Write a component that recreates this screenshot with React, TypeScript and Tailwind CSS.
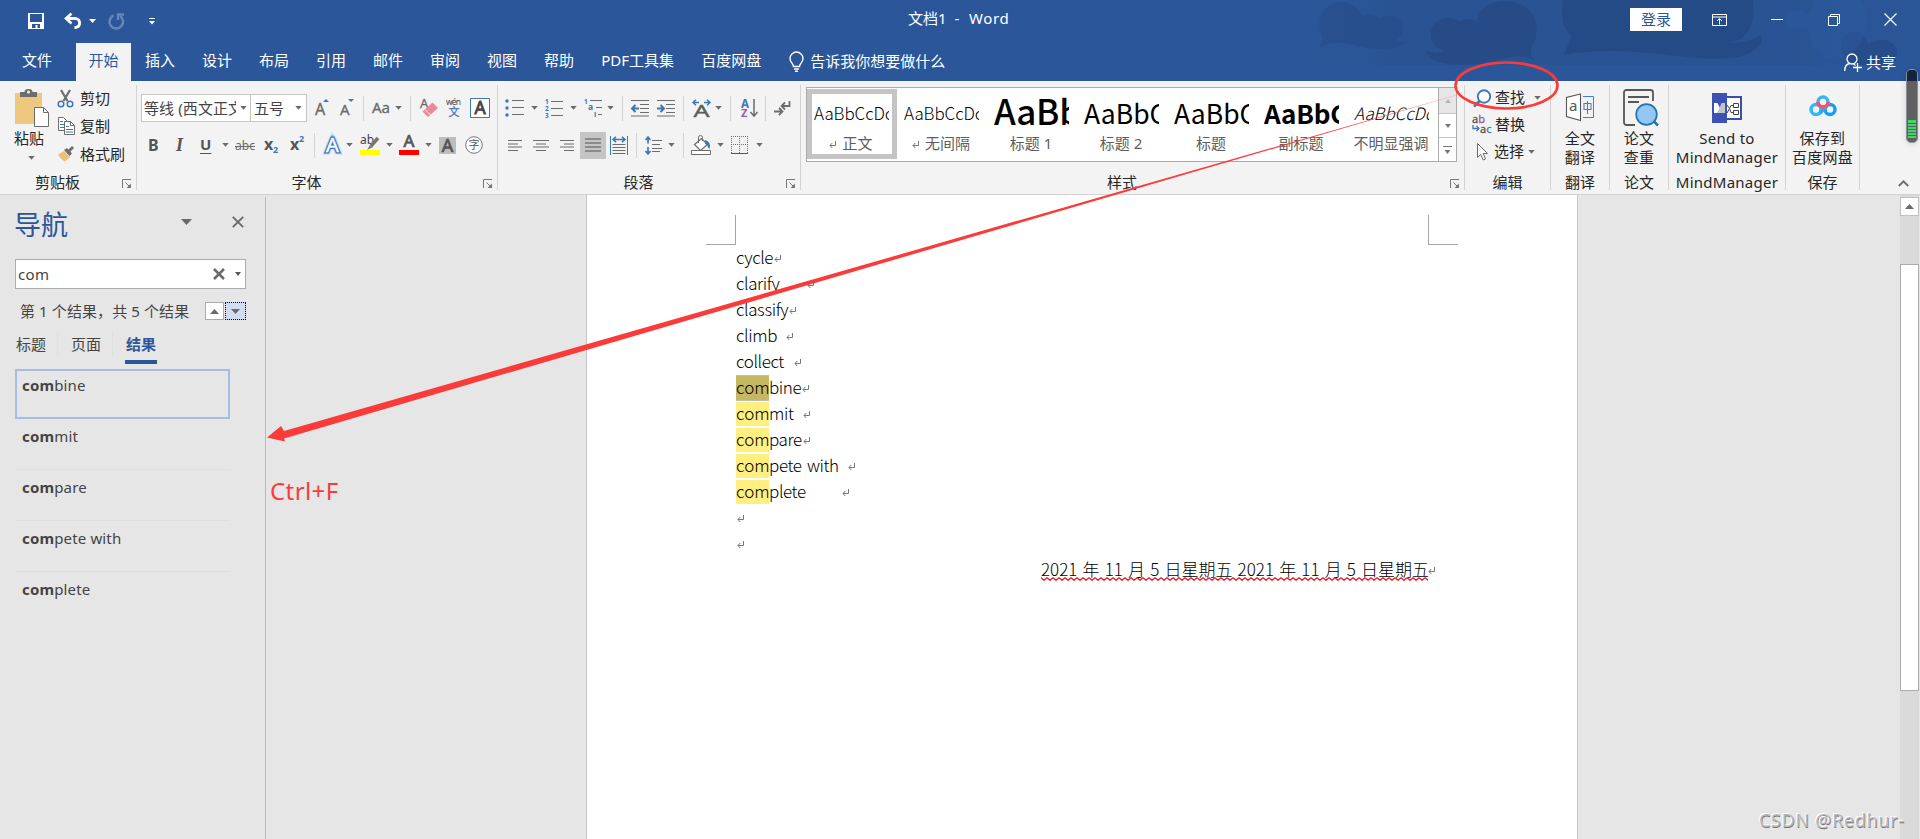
import React from "react";

const UI = "font-['Noto_Sans','Noto_Sans_CJK_SC',sans-serif]";
const DOC = "font-['Noto_Sans_CJK_SC',sans-serif]";

function Ico({
  w,
  h,
  className = "",
  children,
}: {
  w: number;
  h: number;
  className?: string;
  children: React.ReactNode;
}) {
  return (
    <svg width={w} height={h} viewBox={`0 0 ${w} ${h}`} fill="none" className={`shrink-0 overflow-visible ${className}`}>
      {children}
    </svg>
  );
}

function Caret({ className = "" }: { className?: string }) {
  return (
    <Ico w={7} h={4} className={className}>
      <path d="M.3 0h6.400L3.500 3.700z" fill="#6a6a6a" />
    </Ico>
  );
}

function Sep({ className = "" }: { className?: string }) {
  return <div className={`h-[25px] w-px shrink-0 bg-[#d2d2d2] ${className}`} />;
}

function Group({
  width,
  label,
  launcher,
  children,
}: {
  width: string;
  label: string;
  launcher?: boolean;
  children: React.ReactNode;
}) {
  return (
    <section className={`flex h-[105px] shrink-0 flex-col border-r border-[#d2d2d2] ${width}`}>
      <div className="h-[88px]">{children}</div>
      <div className="flex h-[17px] items-center leading-[17px]">
        <span className={`flex-1 pt-[2px] text-center whitespace-nowrap ${launcher ? "pr-[7px]" : ""} ${label === "MindManager" ? "tracking-[0.25px]" : ""}`}>
          {label}
        </span>
        {launcher && (
          <Ico w={10} h={10} className="mt-1 mr-1">
            <path d="M.5 9V.5H9" stroke="#777" />
            <path d="M3.500 3.500 7 7" stroke="#777" />
            <path d="M9 4.500V9H4.500z" fill="#777" />
          </Ico>
        )}
      </div>
    </section>
  );
}

function TitleBar() {
  return (
    <div className="relative flex h-[43px] items-center text-white">
      <div className="flex w-[908px] shrink-0 items-center pb-px">
        <Ico w={16} h={16} className="ml-7">
          <path d="M0 0h16v16H0z" fill="#fff" />
          <path d="M2 1h12v8H2zM4 11h8v4H9.500v-3h-2v3H4z" fill="#2b579a" />
        </Ico>
        <Ico w={18} h={16} className="ml-5">
          <path d="M2 5.500h10a4.600 4.600 0 0 1 0 9h-1.500" stroke="#fff" strokeWidth="2.800" />
          <path d="M7.500.5 2 5.500l5.500 5" stroke="#fff" strokeWidth="2.600" />
        </Ico>
        <Ico w={7} h={4} className="ml-[7px]">
          <path d="M0 0h7L3.500 4z" fill="#fff" />
        </Ico>
        <Ico w={17} h={17} className="ml-3">
          <path d="M5.500 2.500a6.800 6.800 0 1 0 6.500.500" stroke="#6586b7" strokeWidth="2.500" />
          <path d="M10 7V1.500h6" stroke="#6586b7" strokeWidth="2.300" />
        </Ico>
        <Ico w={6} h={7} className="ml-6">
          <path d="M0 0h6v1H0zM0 3h6L3 6.500z" fill="#fff" />
        </Ico>
      </div>
      <span className="shrink-0 pb-[6px] whitespace-pre">
        文档1&nbsp; -&nbsp; <span className="ml-[2px] tracking-[0.6px]">Word</span>
      </span>
      <div className="ml-auto flex w-[290px] shrink-0 items-center pb-1">
        <button className="h-[23px] w-[52px] bg-white leading-[23px] text-[#2b579a]">登录</button>
        <Ico w={15} h={12} className="ml-[30px]">
          <path d="M.5.5h14v11H.5zM.5 3h14M7.500 10.500V5M5 7l2.500-2.500L10 7" stroke="#fff" />
        </Ico>
        <Ico w={12} h={1} className="ml-11">
          <path d="M0 0h12v1H0z" fill="#fff" />
        </Ico>
        <Ico w={12} h={12} className="ml-[45px]">
          <path d="M.5 2.500h9v9h-9zM2.500 2.500v-2h9v9h-2" stroke="#fff" />
        </Ico>
        <Ico w={13} h={13} className="ml-[44px]">
          <path d="m.5.5 12 12m0-12-12 12" stroke="#fff" strokeWidth="1.200" />
        </Ico>
      </div>
    </div>
  );
}

function HeaderArt() {
  return (
    <svg width="630" height="65" viewBox="1290 0 630 65" className="absolute top-0 right-0">
      <defs>
        <linearGradient id="haze" x1="0" x2="1" y1="0" y2="0">
          <stop offset="0" stopColor="#274f8c" stopOpacity="0" />
          <stop offset=".2" stopColor="#274f8c" stopOpacity=".5" />
          <stop offset=".75" stopColor="#274f8c" stopOpacity=".45" />
          <stop offset="1" stopColor="#274f8c" stopOpacity=".2" />
        </linearGradient>
      </defs>
      <path d="M1290 0h630v65h-630z" fill="url(#haze)" />
      <g fill="#254a84">
        <path
          opacity=".5"
          d="M1319 48c5-8 4-10 2-15-6-17 6-31 21-31 11 0 17 7 20 14 10-5 16 1 17 2 10-6 25 0 24 11 0 6-5 10-8 12 5 1 9 0 13-1-10 13-38 9-50 6-15-4-29-5-39 2z"
        />
        <path
          opacity=".8"
          d="M1426 50c8 4 12 3 18 1-9-3-14-10-13-19 1-14 19-18 29-10 6-5 14-3 17 1 0-13 12-22 28-22 22 0 35 17 31 35-2 10-7 13-5 20l4 5c-12-8-25-5-45 1-25 6-66 3-64-12z"
        />
        <path opacity=".85" d="M1563 0h190c2 24-3 40-26 43 14 0 25-2 34-8 4 12-12 22-32 23-40 5-100-15-165-3 2-8 6-11 7-19-9-10-10-20-8-36z" />
        <path opacity=".75" d="M1843 55c-6-13 3-23 11-23 9 0 13 6 14 12 10-7 22-5 28 3 2 7 0 15-3 18h-40z" />
      </g>
      <path d="M1785 16c8-8 20-7 23-1C1814 5 1815 0 1815 0h46c14 20 4 50-20 59-16 4-32-10-34-32-8 4-24 2-22-11z" fill="#2b5a9f" opacity=".5" />
    </svg>
  );
}

function Tabs() {
  return (
    <nav className="relative flex h-[38px] items-center leading-[34px] whitespace-nowrap text-white">
      <span className="h-[38px] w-[76px] pl-[22px]">文件</span>
      <span className="h-[38px] w-[55px] bg-[#f3f3f3] text-center text-[#2b579a]">开始</span>
      <div className="ml-[14px] flex h-[38px] gap-[27px]">
        <span>插入</span>
        <span>设计</span>
        <span>布局</span>
        <span>引用</span>
        <span>邮件</span>
        <span>审阅</span>
        <span>视图</span>
        <span>帮助</span>
        <span className="w-[73px]">PDF工具集</span>
        <span>百度网盘</span>
      </div>
      <Ico w={15} h={20} className="mb-px ml-[28px]">
        <path d="M4.500 14.500c0-3-3.500-4-3.500-8a6.500 6.500 0 0 1 13 0c0 4-3.500 5-3.500 8zM5 17h5M6 19.300h3" stroke="#fff" strokeWidth="1.400" />
      </Ico>
      <span className="mb-[2px] ml-1.5">告诉我你想要做什么</span>
      <div className="ml-auto flex w-[76px] items-center">
        <Ico w={18} h={19}>
          <circle cx="8" cy="6" r="5" stroke="#fff" strokeWidth="1.300" />
          <path d="M.7 18c0-4 2-7 5-7.500M9.500 11l2 1.500M13.500 10v9M9 14.500h9" stroke="#fff" strokeWidth="1.300" />
        </Ico>
        <span className="ml-1">共享</span>
      </div>
    </nav>
  );
}

function Clipboard() {
  return (
    <Group width="w-[137px]" label="剪贴板" launcher>
      <div className="flex">
        <div className="flex w-[57px] flex-col pt-1 pl-[14px]">
          <Ico w={35} h={38} className="ml-px">
            <path d="M0 4h27v31H0z" fill="#edc87e" />
            <path d="M5 3h4.500a4 3 0 0 1 8 0H22v5H5z" fill="#6d6d6d" />
            <circle cx="13.500" cy="3" r="1.500" fill="#f3f3f3" />
            <path d="M19.500 18.500h9l5 5v14h-14z" fill="#fff" stroke="#6d6d6d" />
            <path d="M28.500 18.500v5h5" stroke="#6d6d6d" />
          </Ico>
          <span className="mt-[2px] leading-[18px]">粘贴</span>
          <Caret className="mt-[9px] ml-[14px]" />
        </div>
        <div className="-mt-px flex flex-col">
          <div className="flex h-[28px] items-center gap-[6px] leading-[28px]">
            <Ico w={17} h={18} className="mt-px">
              <path d="m4 0 6.500 11M13 0 6.500 11" stroke="#6d6d6d" strokeWidth="2.200" />
              <circle cx="4" cy="14" r="2.800" stroke="#3f77b5" strokeWidth="1.500" />
              <circle cx="13" cy="14" r="2.800" stroke="#3f77b5" strokeWidth="1.500" />
            </Ico>
            剪切
          </div>
          <div className="flex h-[28px] items-center gap-[5px] leading-[28px]">
            <Ico w={18} h={18}>
              <path d="M1.500.5h5l4 4v9h-9z" fill="#fff" stroke="#6d6d6d" />
              <path d="M3 4.500h3M3 7.500h5M3 10.500h5" stroke="#3f77b5" />
              <path d="M7.500 4.500h6l4 4v9h-10z" fill="#fff" stroke="#6d6d6d" />
              <path d="M13.500 4.500v4h4" stroke="#6d6d6d" />
              <path d="M9 9.500h3M9 12.500h7M9 15h7" stroke="#3f77b5" />
            </Ico>
            复制
          </div>
          <div className="flex h-[28px] items-center gap-[5px] leading-[28px]">
            <Ico w={18} h={16}>
              <path d="M1 8.500 7 5l6 6-5 4.500C5 14 3 12 1 8.500z" fill="#edc07a" />
              <path d="m7 4 3-2 5 5.500-2.500 2.500z" fill="#6d6d6d" />
              <path d="m12 5 4-4" stroke="#6d6d6d" strokeWidth="3" />
            </Ico>
            格式刷
          </div>
        </div>
      </div>
    </Group>
  );
}

function FontGroup() {
  const bold = { fontFamily: "Noto Sans", fontWeight: 700 };
  const reg = { fontFamily: "Noto Sans" };
  return (
    <Group width="w-[361px]" label="字体" launcher>
      <div className="mt-[9px] flex h-[28px] items-center">
        <div className="ml-1 flex h-[28px] w-[110px] shrink-0 items-center border border-[#c6c6c6] bg-white text-[#444]">
          <span className="ml-[2px] w-[92px] overflow-hidden tracking-[0.1px] whitespace-nowrap">等线 (西文正文)</span>
          <Caret className="ml-[4px]" />
        </div>
        <div className="flex h-[28px] w-[56px] shrink-0 items-center border border-l-0 border-[#c6c6c6] bg-white text-[#444]">
          <span className="ml-[3px] w-[30px]">五号</span>
          <Caret className="ml-[11px]" />
        </div>
        <Ico w={15} h={18} className="ml-2">
          <text x="0" y="16" fontSize="16" fill="#6a6a6a" stroke="#6a6a6a" strokeWidth=".3" style={reg}>A</text>
          <path d="M8 3h6l-3-3z" fill="#3f77b5" />
        </Ico>
        <Ico w={15} h={18} className="ml-[10px]">
          <text x="0" y="16" fontSize="15" fill="#6a6a6a" stroke="#6a6a6a" strokeWidth=".3" style={reg}>A</text>
          <path d="M8 0h6l-3 3z" fill="#3f77b5" />
        </Ico>
        <Sep className="ml-2" />
        <Ico w={19} h={16} className="ml-2">
          <text x="0" y="12.500" fontSize="15" fill="#6a6a6a" stroke="#6a6a6a" strokeWidth=".3" style={reg}>Aa</text>
        </Ico>
        <Caret className="ml-1" />
        <Sep className="ml-2" />
        <Ico w={19} h={20} className="ml-[9px]">
          <text x="0" y="10" fontSize="13" fill="#6a6a6a" stroke="#6a6a6a" strokeWidth=".3" style={reg}>A</text>
          <path d="m2.500 13.500 10-9L18 10 8 19z" fill="#e88a9c" />
          <path d="m5 11.500 5.500 5.500" stroke="#f3f3f3" />
        </Ico>
        <Ico w={16} h={20} className="ml-[7px]">
          <text x="0" y="7" fontSize="8.500" fill="#444" textLength="15" style={reg}>wén</text>
          <text x="2.500" y="18" fontSize="11" fill="#3f77b5" stroke="#3f77b5" strokeWidth=".3" style={{ fontFamily: "Noto Sans CJK SC" }}>文</text>
        </Ico>
        <Ico w={20} h={20} className="ml-2">
          <path d="M.5.5h19v19H.5z" fill="#fff" stroke="#3f77b5" />
          <text x="10" y="16" fontSize="17.500" textAnchor="middle" fill="#444" stroke="#444" strokeWidth=".8" style={reg}>A</text>
        </Ico>
      </div>
      <div className="mt-[9px] flex h-[28px] items-center text-[#555]">
        <span className="ml-[11px] w-[10px] text-[16px] font-bold">B</span>
        <span className="ml-[18px] w-[10px] font-['Liberation_Serif'] text-[18px] font-bold italic">I</span>
        <span className="mb-[2px] ml-[14px] w-[12px] text-[15px] font-bold underline decoration-1 underline-offset-[3px]">U</span>
        <Caret className="ml-[10px]" />
        <Ico w={20} h={18} className="ml-1.5">
          <text x="0" y="14" fontSize="13" fill="#6a6a6a" textLength="20" lengthAdjust="spacingAndGlyphs" style={reg}>abc</text>
          <path d="M0 10.500h20" stroke="#6a6a6a" />
        </Ico>
        <Ico w={15} h={18} className="ml-[9px]">
          <text x="0" y="14" fontSize="16" fill="#555" style={bold}>x</text>
          <text x="9" y="17" fontSize="9" fill="#3f77b5" style={bold}>2</text>
        </Ico>
        <Ico w={15} h={20} className="ml-[11px]">
          <text x="0" y="15" fontSize="16" fill="#555" style={bold}>x</text>
          <text x="9" y="7" fontSize="9" fill="#3f77b5" style={bold}>2</text>
        </Ico>
        <Sep className="ml-[9px]" />
        <Ico w={17} h={20} className="ml-[9px]">
          <text x="8.500" y="16.500" fontSize="20" textAnchor="middle" stroke="#c3d9f2" strokeWidth="5" style={reg}>A</text>
          <text x="8.500" y="16.500" fontSize="20" textAnchor="middle" stroke="#3f77c0" strokeWidth="3" style={reg}>A</text>
          <text x="8.500" y="16.500" fontSize="20" textAnchor="middle" fill="#fff" stroke="#fff" strokeWidth=".4" style={reg}>A</text>
        </Ico>
        <Caret className="ml-[5px]" />
        <Ico w={20} h={20} className="ml-[7px]">
          <text x="0" y="9" fontSize="12" fill="#444" style={reg}>ab</text>
          <path d="m18 3-7 8" stroke="#777" strokeWidth="3.500" />
          <path d="m10 10 3 2-6 3z" fill="#777" />
          <path d="M0 15h20v5H0z" fill="#ff0" />
        </Ico>
        <Caret className="ml-1.5" />
        <Ico w={20} h={20} className="ml-1.5">
          <text x="10" y="12" fontSize="17" textAnchor="middle" fill="#555" stroke="#555" strokeWidth=".7" style={reg}>A</text>
          <path d="M0 15h20v5H0z" fill="red" />
        </Ico>
        <Caret className="ml-1.5" />
        <Ico w={17} h={19} className="ml-[7px]">
          <path d="M0 1h17v17H0z" fill="#bdbdbd" />
          <text x="8.500" y="15.500" fontSize="18" textAnchor="middle" fill="#555" stroke="#555" strokeWidth=".7" style={reg}>A</text>
        </Ico>
        <Ico w={18} h={18} className="ml-[9px]">
          <circle cx="9" cy="9" r="8.300" stroke="#777" fill="#fff" />
          <text x="9" y="13" fontSize="11" textAnchor="middle" fill="#555" style={{ fontFamily: "Noto Sans CJK SC" }}>字</text>
        </Ico>
      </div>
    </Group>
  );
}

function ParagraphGroup() {
  const g = "#6d6d6d";
  const b = "#3f77b5";
  const f = { fontFamily: "Noto Sans", fontWeight: 700 };
  return (
    <Group width="w-[303px]" label="段落" launcher>
      <div className="mt-[9px] flex h-[28px] items-center">
        <Ico w={20} h={18} className="ml-[7px]">
          <circle cx="2" cy="2" r="1.700" fill={b} />
          <circle cx="2" cy="9" r="1.700" fill={b} />
          <circle cx="2" cy="16" r="1.700" fill={b} />
          <path d="M7 1.500h12M7 8.500h12M7 15.500h12" stroke={g} />
        </Ico>
        <Caret className="ml-1.5" />
        <Ico w={19} h={19} className="ml-[7px]">
          <text y="5" fontSize="6.500" fill={b} style={f}>1</text>
          <text y="12" fontSize="6.500" fill={b} style={f}>2</text>
          <text y="19" fontSize="6.500" fill={b} style={f}>3</text>
          <path d="M6 2.500h12M6 9.500h12M6 16.500h12" stroke={g} />
        </Ico>
        <Caret className="ml-1.5" />
        <Ico w={19} h={18} className="ml-[7px]">
          <text y="4.500" fontSize="6.500" fill={b} style={f}>1</text>
          <text x="4" y="11" fontSize="8.500" fill={b} style={f}>a</text>
          <text x="10" y="17.500" fontSize="7.500" fill={b} style={f}>i</text>
          <path d="M6 1.500h12M12 8.500h6M14 15.500h4" stroke={g} />
        </Ico>
        <Caret className="ml-1" />
        <Sep className="ml-2" />
        <Ico w={18} h={17} className="ml-2">
          <path d="M0 .5h18M9 4.500h9M9 8.500h9M9 12.500h9M0 16h18" stroke={g} />
          <path d="M1 8.500h7M4.500 5 1 8.500 4.500 12" stroke={b} strokeWidth="2" />
        </Ico>
        <Ico w={18} h={17} className="ml-2">
          <path d="M0 .5h18M9 4.500h9M9 8.500h9M9 12.500h9M0 16h18" stroke={g} />
          <path d="M0 8.500h7M3.500 5 7 8.500 3.500 12" stroke={b} strokeWidth="2" />
        </Ico>
        <Sep className="ml-2" />
        <Ico w={19} h={19} className="ml-2">
          <text x="1.500" y="17.500" fontSize="16" fill="#5f5f5f" stroke="#5f5f5f" strokeWidth=".4" textLength="16" lengthAdjust="spacingAndGlyphs" style={{ fontFamily: "Noto Sans" }}>A</text>
          <path d="M1 3.500h6M4 .8 1 3.500l3 2.700M18 3.500h-6M15 .8l3 2.700-3 2.700" stroke={b} strokeWidth="1.500" />
        </Ico>
        <Caret className="ml-1" />
        <Sep className="ml-2" />
        <Ico w={17} h={20} className="ml-[10px]">
          <text x="0" y="9.500" fontSize="11.500" fill={b} style={f}>A</text>
          <text x="0" y="19" fontSize="11" fill="#8e5bb0" style={f}>Z</text>
          <path d="M13 1v16M9.500 14l3.500 4 3.500-4" stroke={g} strokeWidth="1.500" />
        </Ico>
        <Sep className="ml-[7px]" />
        <Ico w={17} h={16} className="ml-2">
          <path d="M0 11.500h8M5 8l3.500 3.500L5 15" stroke={g} strokeWidth="1.800" />
          <path d="M15.500 1v5H8M11 2.500 7.500 6 11 9.500" stroke={g} strokeWidth="1.800" />
        </Ico>
      </div>
      <div className="mt-[9px] flex h-[28px] items-center">
        <Ico w={14} h={11} className="ml-[10px]">
          <path d="M0 .5h14M0 4h10M0 7h14M0 10.500h10" stroke={g} />
        </Ico>
        <Ico w={16} h={11} className="ml-[11px]">
          <path d="M0 .5h16M3 4h10M0 7h16M3 10.500h10" stroke={g} />
        </Ico>
        <Ico w={14} h={11} className="ml-[11px]">
          <path d="M0 .5h14M4 4h10M0 7h14M4 10.500h10" stroke={g} />
        </Ico>
        <div className="ml-1.5 flex h-[27px] w-[26px] shrink-0 items-center justify-center bg-[#c5c5c5]">
          <Ico w={16} h={14}>
            <path d="M0 1h16M0 5h16M0 9h16M0 13h16" stroke="#555" strokeWidth="1.100" />
          </Ico>
        </div>
        <Ico w={18} h={19} className="ml-1">
          <path d="M.5 0v19M17.500 0v19" stroke={b} />
          <path d="M3 3.500h12M6 .8 3 3.500l3 2.700M12 .8l3 2.700-3 2.700" stroke={b} strokeWidth="1.600" />
          <path d="M2.500 8.500h13M2.500 11.500h13M2.500 14.500h13M2.500 17.500h13" stroke={g} />
        </Ico>
        <Sep className="ml-2" />
        <Ico w={17} h={19} className="ml-2">
          <path d="M3 1v6.500M.5 4 3 1l2.500 3M3 11v6.500M.5 15 3 18l2.500-3" stroke={b} strokeWidth="1.700" />
          <path d="M7 4.500h10M7 8.500h8M7 12.500h10M7 15.500h8" stroke={g} />
        </Ico>
        <Caret className="ml-1.5" />
        <Sep className="ml-2" />
        <Ico w={20} h={20} className="ml-[7px]">
          <path d="m3.500 9.500 7-6 6 6-7 6z" fill="#fff" stroke={g} strokeWidth="1.200" />
          <path d="M7.500 8V2.500a2 2 0 0 1 4 0V6" stroke={g} />
          <path d="M14 5c4 1 6 4 4.500 9-2-1-1-4-4.500-5z" fill={b} />
          <path d="M.5 15.500h19v4H.5z" fill="#fff" stroke={g} />
        </Ico>
        <Caret className="ml-1.5" />
        <Ico w={17} h={18} className="ml-[7px]">
          <path d="M0 .5h17M0 8.500h17M.5 0v17M8.500 0v17M16.500 0v17" stroke={g} strokeDasharray="1 1" />
          <path d="M0 17.500h17" stroke="#555" />
        </Ico>
        <Caret className="ml-2" />
      </div>
    </Group>
  );
}

function ParaMark({ className = "" }: { className?: string }) {
  return (
    <Ico w={8} h={8} className={className}>
      <path d="M6.500 0v4.500H1M3.300 2 1 4.500 3.300 7" stroke="#777" />
    </Ico>
  );
}

const styleItems = [
  { name: "正文", mark: true, cls: "text-[17px] font-light tracking-[-0.1px] pt-[7px]" },
  { name: "无间隔", mark: true, cls: "text-[17px] font-light tracking-[-0.1px] pt-[7px]" },
  { name: "标题 1", cls: "text-[35px] font-medium tracking-[-0.3px] pt-[4px]" },
  { name: "标题 2", cls: "text-[26.500px] font-normal pt-[7px]" },
  { name: "标题", cls: "text-[26.500px] font-normal pt-[7px]" },
  { name: "副标题", cls: "text-[26px] font-bold tracking-[-0.2px] pt-[7px]" },
  { name: "不明显强调", cls: "text-[17px] font-light italic tracking-[-0.1px] pt-[7px] text-[#404040]" },
];

function StylesGroup() {
  return (
    <Group width="w-[664px]" label="样式" launcher>
      <div className="mt-[2px] ml-[5px] flex h-[75px] w-[651px] border border-[#ababab] bg-white">
        <div className="flex w-[631px] pt-px">
          {styleItems.map((s, i) => (
            <div
              key={s.name}
              className={`flex h-[70px] w-[90px] shrink-0 flex-col border-[5px] pr-[4px] pl-[2px] ${i === 0 ? "border-[#c5c5c5]" : "border-transparent"}`}
            >
              <div className={`-mt-[1px] h-[42px] w-[75px] overflow-hidden leading-[26px] whitespace-nowrap text-black ${DOC} ${s.cls}`}>
                AaBbCcDc
              </div>
              <div className="-mx-[6px] flex h-[16px] items-center justify-center gap-[5px] leading-[16px] whitespace-nowrap text-[#5e5e5e]">
                {s.mark && <ParaMark className="mt-1" />}
                {s.name}
              </div>
            </div>
          ))}
        </div>
        <div className="flex flex-1 flex-col border-l border-[#ababab]">
          <div className="flex h-[25px] items-center justify-center bg-[#e6e6e6]">
            <Ico w={6} h={4}>
              <path d="M0 4h6L3 0z" fill="#b5b5b5" />
            </Ico>
          </div>
          <div className="flex h-[25px] items-center justify-center border-y border-[#c6c6c6]">
            <Ico w={6} h={4}>
              <path d="M0 0h6L3 4z" fill="#777" />
            </Ico>
          </div>
          <div className="flex h-[23px] items-center justify-center">
            <Ico w={9} h={8}>
              <path d="M0 0h9v1H0zM1.500 4h6l-3 4z" fill="#777" />
            </Ico>
          </div>
        </div>
      </div>
    </Group>
  );
}

function EditGroup() {
  return (
    <Group width="w-[86px]" label="编辑">
      <div className="flex h-[25px] items-center pl-[8px] leading-[25px]">
        <Ico w={18} h={19} className="mt-[2px]">
          <circle cx="11" cy="7.500" r="6.200" stroke="#3f77b5" strokeWidth="1.900" fill="#fff" />
          <path d="M6.500 12 1 17.500" stroke="#3f77b5" strokeWidth="2.500" />
        </Ico>
        <span className="ml-[4px]">查找</span>
        <Caret className="ml-[9px]" />
      </div>
      <div className="flex h-[28px] items-center pl-[7px] leading-[28px]">
        <Ico w={20} h={19} className="mt-px">
          <text x="0" y="8" fontSize="11" fill="#555" stroke="#555" strokeWidth=".3" style={{ fontFamily: "Noto Sans" }}>
            a<tspan fill="#8e5bb0" stroke="#8e5bb0">b</tspan>
          </text>
          <text x="8" y="17.500" fontSize="11" fill="#555" stroke="#555" strokeWidth=".3" style={{ fontFamily: "Noto Sans" }}>
            a<tspan fill="#3f77b5" stroke="#3f77b5">c</tspan>
          </text>
          <path d="M1 10v3.500h5M4.500 11 7 13.500 4.500 16" stroke="#3f77b5" strokeWidth="1.300" />
        </Ico>
        <span className="ml-[3px]">替换</span>
      </div>
      <div className="flex h-[27px] items-center pl-[12px] leading-[27px]">
        <Ico w={12} h={18}>
          <path d="M.5.5v14l3.200-3 2.500 5.500 2.300-1-2.300-5.500h4.300z" fill="#fff" stroke="#6d6d6d" />
        </Ico>
        <span className="ml-[5px]">选择</span>
        <Caret className="ml-1" />
      </div>
    </Group>
  );
}

function BigButton({ lines, children }: { lines: string[]; children: React.ReactNode }) {
  return (
    <div className="flex flex-col items-center tracking-[0.25px] whitespace-nowrap">
      <div className="flex h-[44px] items-center justify-center">{children}</div>
      {lines.map((l) => (
        <span key={l} className="leading-[19px]">
          {l}
        </span>
      ))}
    </div>
  );
}

function Ribbon() {
  return (
    <div className="flex h-[114px] border-b border-[#d2d2d2] bg-[#f3f3f3] pt-1 text-[#262626]">
      <Clipboard />
      <FontGroup />
      <ParagraphGroup />
      <StylesGroup />
      <EditGroup />
      <Group width="w-[59px]" label="翻译">
        <BigButton lines={["全文", "翻译"]}>
          <Ico w={28} h={29} className="mt-px">
            <path d="M14.500 1 .5 4.500v19l14 4z" fill="#fff" stroke="#555" strokeWidth="1.100" />
            <path d="M17 3.500h10.500v21H17" stroke="#3f82d0" />
            <text x="3" y="18" fontSize="15" fill="#555" style={{ fontFamily: "Noto Sans" }}>a</text>
            <path d="M18 10.500h7v6h-7zM21.500 8v13" stroke="#3f82d0" strokeWidth="1.100" />
          </Ico>
        </BigButton>
      </Group>
      <Group width="w-[59px]" label="论文">
        <BigButton lines={["论文", "查重"]}>
          <Ico w={36} h={38} className="mt-px ml-1">
            <path d="M30 12V3.500A2.500 2.500 0 0 0 27.500 1h-24A2.500 2.500 0 0 0 1 3.500v30A2.500 2.500 0 0 0 3.500 36H12" stroke="#545954" strokeWidth="1.800" />
            <path d="M5 8h21M5 13h11" stroke="#545954" strokeWidth="2" />
            <path d="m30.500 32 4.500 4.500" stroke="#2674a8" strokeWidth="2.500" />
            <circle cx="23.500" cy="25.500" r="10.300" fill="#93c7f7" stroke="#2674a8" strokeWidth="1.700" />
          </Ico>
        </BigButton>
      </Group>
      <Group width="w-[117px]" label="MindManager">
        <BigButton lines={["Send to", "MindManager"]}>
          <Ico w={30} h={30} className="mt-px">
            <path d="M14 4h15v22H14z" fill="#fff" stroke="#3b4fa5" strokeWidth="2" />
            <path d="M0 0h15v30H0z" fill="#3c51b4" />
            <path d="M2 10h3.500L8 15l-2.500 5H2z" fill="#fff" />
            <path d="M13 10H9.500L5.500 20H13z" fill="#c3c5cc" />
            <path d="M21.500 10.500h5v4h-5zM21.500 17.500h5v4h-5zM21 12.500h-2l-1.500 3 1.500 4h2M15 12l2.500 3.500L15 20" stroke="#444" />
          </Ico>
        </BigButton>
      </Group>
      <Group width="w-[74px]" label="保存">
        <BigButton lines={["保存到", "百度网盘"]}>
          <Ico w={28} h={22} className="mb-[2px]">
            <circle cx="7" cy="14.500" r="5" stroke="#2fb9f8" strokeWidth="3.500" />
            <circle cx="21" cy="14.500" r="5" stroke="#159ff5" strokeWidth="3.500" />
            <path d="m10.500 18.500 7.500-8" stroke="#25adf7" strokeWidth="3.500" />
            <circle cx="14" cy="7" r="5" fill="#f3f3f3" stroke="#36b6f5" strokeWidth="3.500" />
            <path d="M9 7a5 5 0 0 0 10 0" stroke="#f8506d" strokeWidth="3.500" />
          </Ico>
        </BigButton>
      </Group>
      <Ico w={11} h={7} className="mt-[95px] ml-[38px]">
        <path d="m.8 6 4.700-4.700L10.200 6" stroke="#6d6d6d" strokeWidth="1.900" />
      </Ico>
    </div>
  );
}

const results = ["bine", "mit", "pare", "pete with", "plete"];

function NavPane() {
  return (
    <aside className="mt-[2px] flex w-[266px] shrink-0 flex-col border-r border-[#bababa] text-[#444]">
      <div className="flex h-[62px] items-center pl-[14px]">
        <h1 className="w-[167px] pb-[5px] text-[27px] text-[#2b579a]">导航</h1>
        <Ico w={11} h={6} className="mb-[12px]">
          <path d="M0 0h11L5.500 6z" fill="#6a6a6a" />
        </Ico>
        <Ico w={12} h={12} className="mb-[12px] ml-10">
          <path d="m.8.8 10.400 10.400m0-10.400L.8 11.200" stroke="#6a6a6a" strokeWidth="1.900" />
        </Ico>
      </div>
      <div className="ml-[15px] flex h-[30px] w-[231px] items-center border border-[#ababab] bg-white pl-[2px]">
        <span className="w-[195px] tracking-[0.3px]">com</span>
        <Ico w={12} h={12} className="mb-px">
          <path d="m1 1 10 10m0-10L1 11" stroke="#6a6a6a" strokeWidth="2.500" />
        </Ico>
        <Ico w={6} h={4} className="ml-[10px]">
          <path d="M0 0h6L3 4z" fill="#555" />
        </Ico>
      </div>
      <div className="mt-[13px] ml-5 flex h-[18px] items-center">
        <span className="w-[185px] leading-[18px] tracking-[0.1px] whitespace-nowrap">第 1 个结果，共 5 个结果</span>
        <div className="flex h-[18px] w-[19px] items-center justify-center border border-[#ababab] bg-white">
          <Ico w={9} h={5}>
            <path d="M0 5h9L4.500 0z" fill="#6a6a6a" />
          </Ico>
        </div>
        <div className="ml-px flex h-[18px] w-[21px] items-center justify-center border border-dotted border-black bg-[#d3ddf1]">
          <Ico w={9} h={5}>
            <path d="M0 0h9L4.500 5z" fill="#6a6a6a" />
          </Ico>
        </div>
      </div>
      <div className="mt-[12px] ml-4 flex h-[32px]">
        <span className="mb-[8px] w-[42px] border-r border-[#e0e0e0] leading-[24px]">标题</span>
        <span className="mb-[8px] w-[55px] border-r border-[#e0e0e0] pl-[13px] leading-[24px]">页面</span>
        <span className="ml-[12px] h-[32px] w-[32px] border-b-4 border-[#2b579a] text-center leading-[24px] font-bold text-[#2b579a]">结果</span>
      </div>
      <div className="mt-[5px] ml-[15px] w-[215px] tracking-[0.15px]">
        {results.map((r, i) => (
          <div
            key={r}
            className={
              i === 0
                ? "h-[50px] border-2 border-[#a3bde3] pl-[5px] leading-[29px]"
                : "h-[51px] pt-[2px] pl-[7px] leading-[30px] not-last:border-b not-last:border-[#dfdfdf]"
            }
          >
            <b>com</b>
            {r}
          </div>
        ))}
      </div>
    </aside>
  );
}

const docLines = [
  { text: "cycle", w: "w-[38px]" },
  { text: "clarify", w: "w-[71px]" },
  { text: "classify", w: "w-[53px]" },
  { text: "climb", w: "w-[50px]" },
  { text: "collect", w: "w-[58px]" },
  { hit: "com", text: "bine", w: "w-[66px]", active: true },
  { hit: "com", text: "mit", w: "w-[67px]" },
  { hit: "com", text: "pare", w: "w-[67px]" },
  { hit: "com", text: "pete with", w: "w-[112px]" },
  { hit: "com", text: "plete", w: "w-[106px]" },
  { text: "", w: "w-[1px]" },
  { text: "", w: "w-[1px]" },
];

function Page() {
  return (
    <main className={`ml-[320px] w-[992px] shrink-0 border-x border-[#c6c6c6] bg-white text-black ${DOC}`}>
      <div className="mt-5 flex justify-between pr-[119px] pl-[119px]">
        <div className="h-[30px] w-[30px] border-r border-b border-[#a6a6a6]" />
        <div className="h-[30px] w-[30px] border-b border-l border-[#a6a6a6]" />
      </div>
      <div className="mt-px ml-[149px] text-[17px] font-light">
        {docLines.map((l, i) => (
          <div key={i} className="mb-[2px] flex h-[24px] items-center whitespace-nowrap">
            <div className={`flex h-[24px] shrink-0 leading-[21px] tracking-[-0.4px] [word-spacing:2px] ${l.w}`}>
              {l.hit && (
                <span className={`w-[33px] shrink-0 tracking-normal ${l.active ? "bg-[#c6b861] shadow-[0_-1px_0_#bdbdbd,0_1px_0_#bdbdbd]" : "bg-[#ffee80]"}`}>{l.hit}</span>
              )}
              <span>{l.text}</span>
            </div>
            <ParaMark className="mt-[2px]" />
          </div>
        ))}
        <div className="mr-[141px] flex h-[24px] items-start justify-end whitespace-nowrap">
          <div className="flex w-[387px] shrink-0 flex-col">
            <span className="h-[18px] leading-[21px] [word-spacing:1.4px]">2021 年 11 月 5 日星期五 2021 年 11 月 5 日星期五</span>
            <svg width="387" height="4" className="mt-px">
              <defs>
                <pattern id="wave" width="6" height="4" patternUnits="userSpaceOnUse">
                  <path d="M-1 -.3 0 .7l3 2.600 3-2.600 1-1" fill="none" stroke="#f00f1e" strokeWidth="1.200" />
                </pattern>
              </defs>
              <rect width="387" height="4" fill="url(#wave)" />
            </svg>
          </div>
          <ParaMark className="mt-[9px]" />
        </div>
      </div>
    </main>
  );
}

function ScrollBar() {
  return (
    <div className="ml-auto flex w-[20px] flex-col border-r border-[#e6e6e6] bg-[#dadada] pt-[2px]">
      <div className="flex h-[19px] w-[19px] items-center justify-center border border-[#c0c0c0] bg-white">
        <Ico w={9} h={5}>
          <path d="M0 5h9L4.500 0z" fill="#6a6a6a" />
        </Ico>
      </div>
      <div className="mt-[48px] h-[427px] w-[19px] border border-[#ababab] bg-white" />
    </div>
  );
}

function Meter() {
  return (
    <div className="absolute top-[69px] left-[1906px] h-[74px] w-[12px] overflow-hidden rounded-[5px] border border-[#8a8f98] bg-[#606060] shadow-[0_1px_6px_rgba(0,0,0,0.15)]">
      <div className="h-[11px] bg-[#14233f]" />
      <div className="mt-[39px] flex flex-col gap-px px-px">
        <div className="h-[3px] bg-[#3fd865]" />
        <div className="h-[2px] bg-[#3fd865]" />
        <div className="h-[2px] bg-[#3fd865]" />
        <div className="h-[2px] bg-[#3fd865]" />
        <div className="h-[2px] bg-[#3fd865]" />
        <div className="h-[2px] bg-[#3fd865]" />
      </div>
    </div>
  );
}

export default function App() {
  return (
    <div className={`relative flex h-[839px] w-[1920px] flex-col overflow-hidden bg-[#e6e6e6] text-[15px] ${UI}`}>
      <header className="relative bg-[#2b579a]">
        <HeaderArt />
        <TitleBar />
        <Tabs />
      </header>
      <Ribbon />
      <div className="flex h-[644px]">
        <NavPane />
        <Page />
        <ScrollBar />
      </div>
      <svg width="1920" height="839" className="pointer-events-none absolute top-0 left-0">
        <path d="M267 437.500 281 426l3 5L1472 90.500 284 438.500l1 3z" fill="#fb3b3a" />
        <ellipse cx="1506.500" cy="85.500" rx="51" ry="23" fill="none" stroke="#fb3b3a" strokeWidth="2.600" />
      </svg>
      <span className="absolute top-[474px] left-[270px] text-[24px] leading-[34px] tracking-[0.4px] text-[#fb3b3a]">Ctrl+F</span>
      <span className="absolute top-[807px] left-[1759px] text-[18px] leading-[26px] tracking-[0.7px] whitespace-nowrap text-[#b9b9b9] [text-shadow:-1px_-1px_0_#ffffff,0.5px_0.5px_0_#777777]">
        CSDN @Redhur-
      </span>
      <Meter />
    </div>
  );
}
